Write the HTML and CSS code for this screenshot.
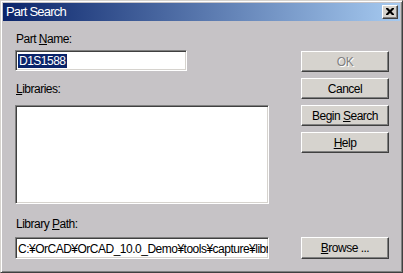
FILE: index.html
```html
<!DOCTYPE html>
<html>
<head>
<meta charset="utf-8">
<link rel="stylesheet" href="styles.css">
</head>
<body>
<div class="window">
  <div class="titlebar">
    <span class="title">Part Search</span>
    <span class="close">
      <svg width="8" height="7" viewBox="0 0 8 7"><path d="M0 0h2l2 2 2-2h2v1l-2.5 2.5L8 6v1H6L4 5 2 7H0V6l2.5-2.5L0 1z" fill="#000"/></svg>
    </span>
  </div>
  <div class="body">
    <div class="left">
      <div class="label">Part <u>N</u>ame:</div>
      <div class="field name"><span class="sel">D1S1588</span></div>
      <div class="label lib-label"><u>L</u>ibraries:</div>
      <div class="field list"></div>
      <div class="label path-label">Library <u>P</u>ath:</div>
      <div class="field path"><span class="txt">C:¥OrCAD¥OrCAD_10.0_Demo¥tools¥capture¥libr</span></div>
    </div>
    <div class="right">
      <div class="btn disabled"><span>OK</span></div>
      <div class="btn"><span>Cancel</span></div>
      <div class="btn"><span>Begin <u>S</u>earch</span></div>
      <div class="btn"><span><u>H</u>elp</span></div>
      <div class="btn browse"><span><u>B</u>rowse ...</span></div>
    </div>
  </div>
</div>
</body>
</html>
```

FILE: styles.css
```css
html, body {
  margin: 0;
  padding: 0;
  background: #c6c3c6;
}
.window {
  width: 403px;
  height: 273px;
  box-sizing: border-box;
  border: 1px solid;
  border-color: #d6d3ce #404040 #404040 #d6d3ce;
  box-shadow: inset 1px 1px #ffffff, inset -1px -1px #808080;
  padding: 2px;
  background: #c6c3c6;
  display: flex;
  flex-direction: column;
  font-family: "Liberation Sans", Arial, sans-serif;
  font-size: 12px;
  letter-spacing: -0.5px;
  color: #000;
}
.titlebar {
  height: 18px;
  flex: none;
  display: flex;
  align-items: center;
  justify-content: space-between;
  background: linear-gradient(to right, #0a246a, #a6caf0);
  padding: 0 2px 0 3px;
}
.title {
  color: #fff;
  font-size: 13px;
  letter-spacing: -0.8px;
  line-height: 18px;
}
.close {
  width: 16px;
  height: 14px;
  box-sizing: border-box;
  background: #d6d3ce;
  border: 1px solid;
  border-color: #ffffff #404040 #404040 #ffffff;
  box-shadow: inset -1px -1px #808080;
  display: flex;
  align-items: center;
  justify-content: center;
  padding: 0 1px 1px 0;
}
.close svg { display: block; }
.body {
  flex: 1;
  display: flex;
  padding: 11px 0 11px 12px;
}
.left {
  width: 254px;
  display: flex;
  flex-direction: column;
}
.label {
  line-height: 14px;
  height: 14px;
  padding-left: 1px;
  white-space: nowrap;
}
.field {
  box-sizing: border-box;
  background: #fff;
  border: 1px solid;
  border-color: #808080 #ffffff #ffffff #808080;
  box-shadow: inset 1px 1px #404040, inset -1px -1px #d6d3ce;
  overflow: hidden;
  white-space: nowrap;
}
.name {
  width: 172px;
  height: 21px;
  margin-top: 4px;
  padding: 3px 0 0 2px;
}
.sel {
  display: inline-block;
  background: #0a246a;
  color: #fff;
  line-height: 14px;
  height: 14px;
  padding: 0 1px;
}
.lib-label { margin-top: 11px; }
.list {
  height: 99px;
  margin-top: 9px;
}
.path-label { margin-top: 13px; }
.path {
  height: 22px;
  margin-top: 6px;
  padding: 4px 0 0 2px;
  line-height: 14px;
}
.right {
  width: 88px;
  margin-left: 32px;
  display: flex;
  flex-direction: column;
  padding-top: 19px;
}
.btn {
  box-sizing: border-box;
  height: 21px;
  margin-bottom: 6px;
  background: #d6d3ce;
  border: 1px solid;
  border-color: #ffffff #404040 #404040 #ffffff;
  box-shadow: inset -1px -1px #808080;
  display: flex;
  align-items: center;
  justify-content: center;
  line-height: 14px;
  white-space: nowrap;
}
.disabled {
  color: #808080;
  text-shadow: 1px 1px #ffffff;
}
.browse {
  margin-top: auto;
  margin-bottom: 0;
  height: 22px;
}
```
